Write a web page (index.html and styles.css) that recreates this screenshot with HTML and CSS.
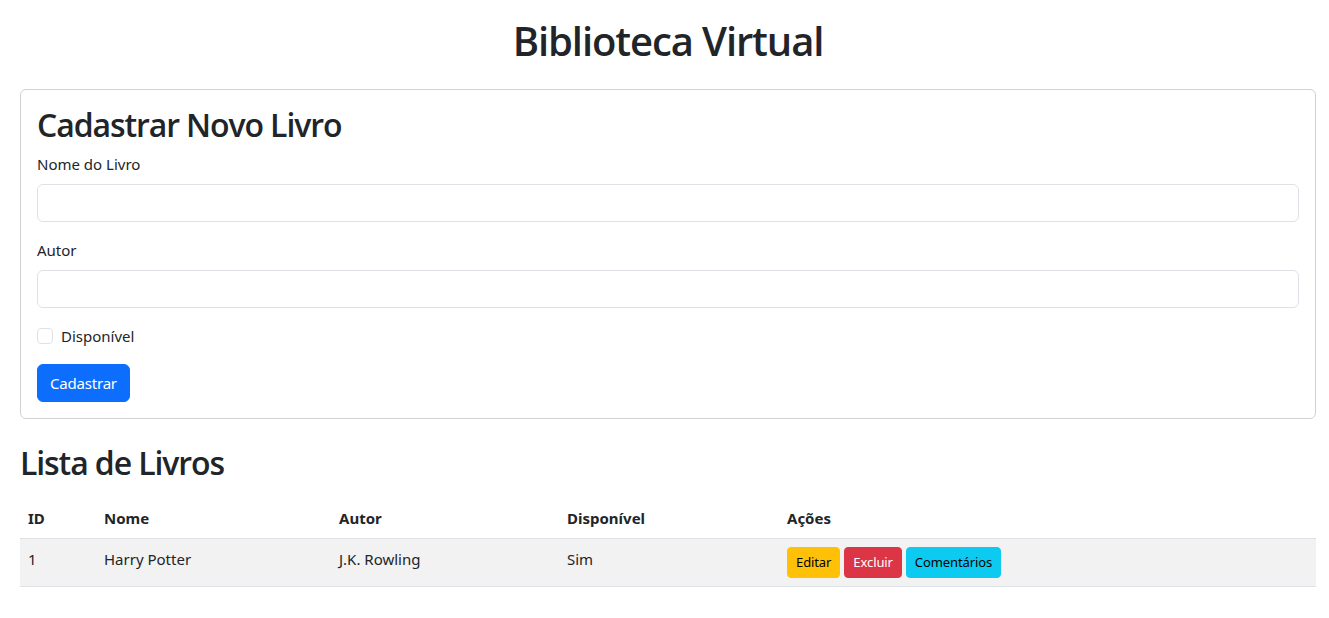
FILE: index.html
```html
<!DOCTYPE html>
<html lang="pt-BR">
<head>
<meta charset="utf-8">
<title>Biblioteca Virtual</title>
<link rel="stylesheet" href="styles.css">
</head>
<body>
<div class="page">
  <h1 class="title">Biblioteca Virtual</h1>

  <section class="card">
    <h2 class="card-title">Cadastrar Novo Livro</h2>
    <div class="field">
      <label class="label" for="nome">Nome do Livro</label>
      <input class="input" id="nome" type="text">
    </div>
    <div class="field">
      <label class="label" for="autor">Autor</label>
      <input class="input" id="autor" type="text">
    </div>
    <div class="check">
      <input class="check-box" id="disp" type="checkbox">
      <label class="check-label" for="disp">Disponível</label>
    </div>
    <button class="btn btn-primary" type="button">Cadastrar</button>
  </section>

  <h2 class="list-title">Lista de Livros</h2>
  <table class="table">
    <colgroup>
      <col class="c-id"><col class="c-nome"><col class="c-autor"><col class="c-disp"><col class="c-acoes">
    </colgroup>
    <thead>
      <tr><th>ID</th><th>Nome</th><th>Autor</th><th>Disponível</th><th>Ações</th></tr>
    </thead>
    <tbody>
      <tr class="striped">
        <td>1</td>
        <td>Harry Potter</td>
        <td>J.K. Rowling</td>
        <td>Sim</td>
        <td>
          <div class="actions">
            <button class="btn-sm btn-warning" type="button">Editar</button>
            <button class="btn-sm btn-danger" type="button">Excluir</button>
            <button class="btn-sm btn-info" type="button">Comentários</button>
          </div>
        </td>
      </tr>
    </tbody>
  </table>
</div>
</body>
</html>
```

FILE: styles.css
```css
* { box-sizing: border-box; }

html, body {
  margin: 0;
  padding: 0;
  background: #fff;
}

body {
  font-family: "Noto Sans", "Open Sans", sans-serif;
  font-size: 16px;
  line-height: 24px;
  color: #212529;
}

.page {
  padding: 17px 13px 20px 20px;
}

.title {
  margin: 0 0 24px;
  font-family: "Open Sans", "Noto Sans", sans-serif;
  font-size: 40px;
  line-height: 48px;
  font-weight: 600;
  text-align: center;
  letter-spacing: -1.1px;
}

.card {
  border: 1px solid #d2d2d2;
  border-radius: 6px;
  padding: 16px;
}

.card-title,
.list-title {
  margin: 0 0 8px;
  font-family: "Open Sans", "Noto Sans", sans-serif;
  font-size: 32px;
  line-height: 38px;
  font-weight: 600;
  letter-spacing: -1.1px;
}

.list-title {
  margin-top: 25px;
  margin-bottom: 16px;
}

.field {
  margin-bottom: 16px;
}

.label {
  display: block;
  margin-bottom: 8px;
  font-size: 15px;
}

.input {
  display: block;
  width: 100%;
  height: 38px;
  padding: 6px 12px;
  border: 1px solid #dee2e6;
  border-radius: 6px;
  font: inherit;
  background: #fff;
}

.check {
  display: flex;
  align-items: center;
  gap: 8px;
  margin-bottom: 16px;
  height: 24px;
}

.check-box {
  appearance: none;
  -webkit-appearance: none;
  width: 16px;
  height: 16px;
  margin: 0;
  border: 1px solid #dee2e6;
  border-radius: 4px;
  background: #fff;
}

.check-label {
  font-size: 15px;
}

.btn {
  display: inline-block;
  height: 38px;
  padding: 6px 12px;
  border: 1px solid transparent;
  border-radius: 6px;
  font-family: inherit;
  font-size: 15px;
  line-height: 24px;
  letter-spacing: -0.2px;
}

.btn-primary {
  background: #0d6efd;
  border-color: #0d6efd;
  color: #fff;
}

.table {
  width: 100%;
  border-collapse: collapse;
  table-layout: fixed;
}

.c-id { width: 76px; }
.c-nome { width: 235px; }
.c-autor { width: 228px; }
.c-disp { width: 220px; }

.table th,
.table td {
  padding: 8px;
  text-align: left;
  vertical-align: top;
  border-bottom: 1px solid #dee2e6;
  font-size: 15px;
}

.table th {
  font-weight: 700;
}

.striped td {
  background: #f2f2f2;
}

.actions {
  display: flex;
  gap: 4px;
}

.btn-sm {
  height: 31px;
  padding: 4px 8px;
  border: 1px solid transparent;
  border-radius: 4px;
  font-family: inherit;
  font-size: 13px;
  line-height: 21px;
  letter-spacing: -0.1px;
}

.btn-warning { background: #ffc107; border-color: #ffc107; color: #000; }
.btn-danger { background: #dc3545; border-color: #dc3545; color: #fff; }
.btn-info { background: #0dcaf0; border-color: #0dcaf0; color: #000; }
```
